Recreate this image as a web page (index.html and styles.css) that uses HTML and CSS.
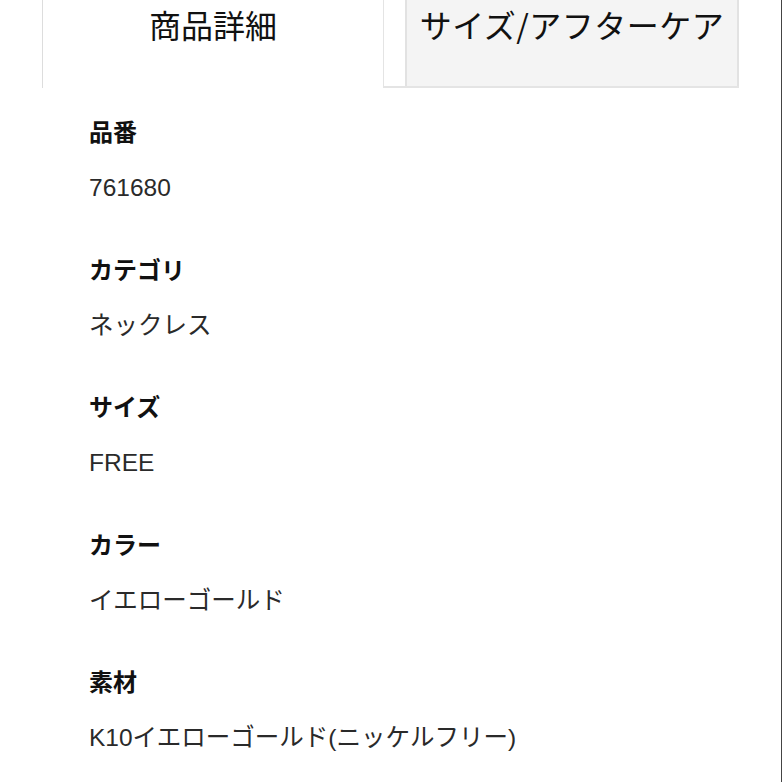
FILE: index.html
```html
<!DOCTYPE html>
<html lang="ja">
<head>
<meta charset="UTF-8">
<meta name="viewport" content="width=device-width, initial-scale=1.0">
<title>商品詳細</title>
<link rel="stylesheet" href="styles.css">
</head>
<body>
<div class="page">
  <div class="tabs">
    <div class="tab active">商品詳細</div>
    <div class="tab">
      <span class="tab-inner">サイズ/アフターケア</span>
    </div>
  </div>

  <div class="details">
    <div class="item">
      <div class="label">品番</div>
      <div class="value">761680</div>
    </div>
    <div class="item">
      <div class="label">カテゴリ</div>
      <div class="value">ネックレス</div>
    </div>
    <div class="item">
      <div class="label">サイズ</div>
      <div class="value">FREE</div>
    </div>
    <div class="item">
      <div class="label">カラー</div>
      <div class="value">イエローゴールド</div>
    </div>
    <div class="item">
      <div class="label">素材</div>
      <div class="value">K10イエローゴールド(ニッケルフリー)</div>
    </div>
  </div>
</div>
</body>
</html>
```

FILE: styles.css
```css
body {
    margin: 0;
    padding: 0;
    font-family: "Liberation Sans", "Noto Sans CJK JP", sans-serif;
    background-color: #fff;
    color: #222;
  }

  .page {
    width: 781px;
    height: 782px;
    border-right: 1px solid #444;
    overflow: hidden;
  }

  .tabs {
    display: flex;
    margin-left: 42px;
    height: 88px;
  }

  .tab {
    font-family: "Noto Sans CJK JP", sans-serif;
    font-size: 32px;
    line-height: 48px;
    color: #111;
    text-align: center;
  }

  .tab.active {
    width: 340px;
    border-left: 1px solid #ddd;
    background-color: #fff;
  }

  .tab:not(.active) {
    display: flex;
    width: 355px;
    border-left: 1px solid #e4e4e4;
    border-bottom: 2px solid #e4e4e4;
  }

  .tab-inner {
    flex: 1;
    margin-left: 21px;
    background-color: #f4f4f4;
    border-left: 2px solid #e2e2e2;
    border-right: 2px solid #e2e2e2;
    letter-spacing: 0.5px;
  }

  .details {
    padding: 23px 0 0 89px;
  }

  .item {
    margin-bottom: 40.5px;
  }

  .label {
    font-family: "Noto Sans CJK JP", sans-serif;
    font-weight: bold;
    font-size: 24px;
    line-height: 40px;
    color: #111;
    margin-bottom: 17px;
  }

  .value {
    font-size: 24.5px;
    line-height: 40px;
    color: #2a2a2a;
  }
```
